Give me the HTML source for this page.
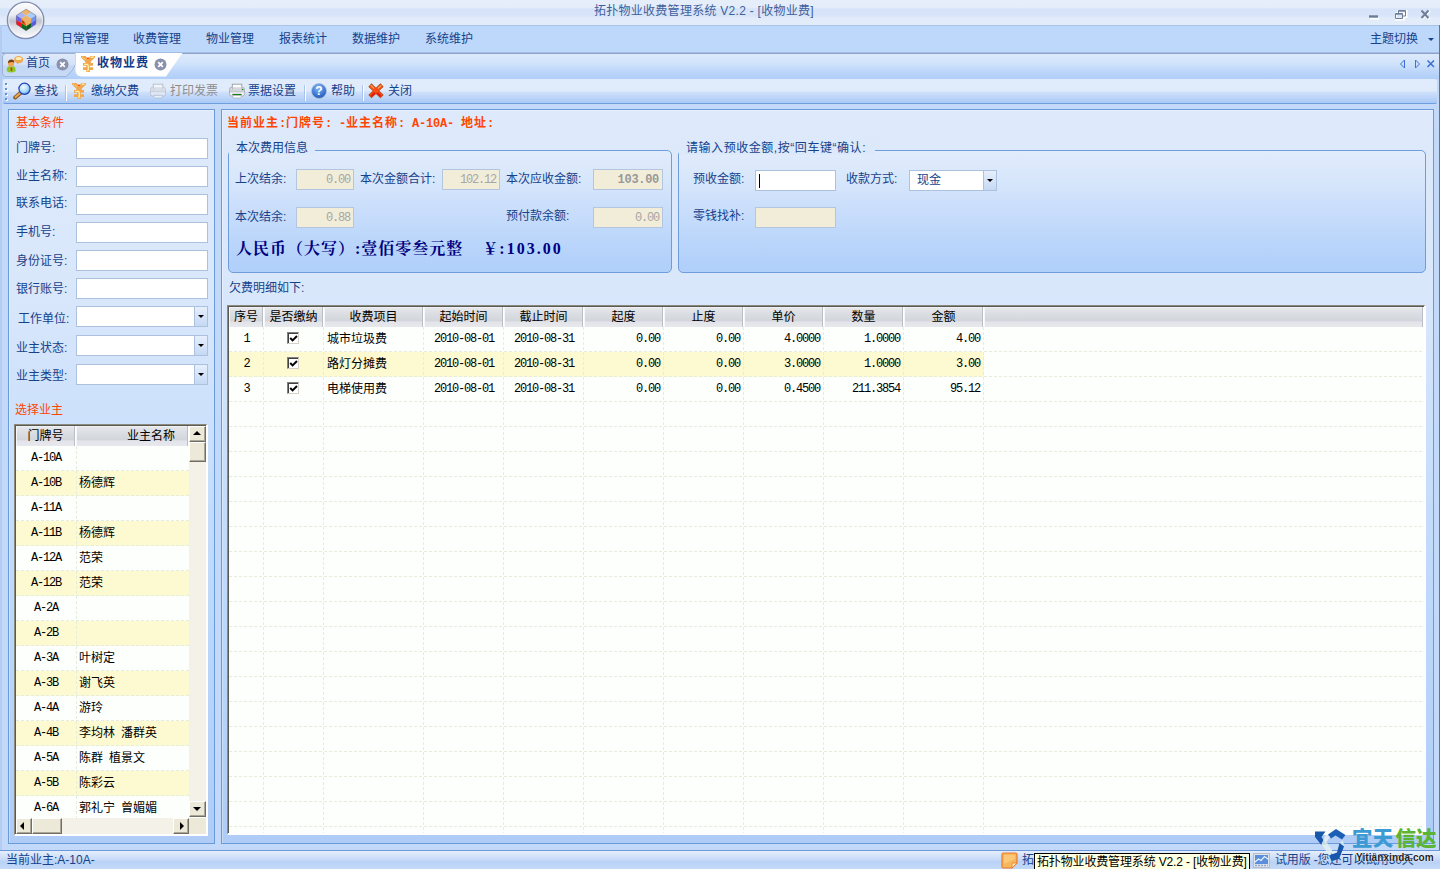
<!DOCTYPE html>
<html lang="zh-CN">
<head>
<meta charset="utf-8">
<title>拓扑物业收费管理系统 V2.2 - [收物业费]</title>
<style>
*{box-sizing:border-box;margin:0;padding:0}
html,body{width:1440px;height:869px;overflow:hidden}
body{position:relative;background:#c2d9f9;font-family:"Liberation Sans","Noto Sans CJK SC","WenQuanYi Zen Hei",sans-serif;font-size:12px;color:#15428b;line-height:14px}
.abs{position:absolute}
.t{position:absolute;white-space:nowrap;line-height:14px;height:14px}
/* top bars */
#titlebar{left:0;top:0;width:1440px;height:25px;background:linear-gradient(#e5eef9 0,#e4edf9 30%,#d6e4f9 36%,#d8e5f9 64%,#e2ebf9 72%,#e3ecf9 100%)}
#menubar{left:0;top:25px;width:1440px;height:29px;background:#bed8fb;border-top:1px solid #aac3ea;border-bottom:1px solid #8fa3c4;box-shadow:inset 0 -1px 0 #a3bde4}
#tabbar{left:0;top:54px;width:1440px;height:25px;background:linear-gradient(#dce9fb,#d0e2fb 40%,#bdd6fa 70%,#b0cef8)}
#toolbar{left:3px;top:79px;width:1434px;height:25px;background:linear-gradient(#e1ecfb,#dfeafb 50%,#cfe0fb 55%,#a9c9f7);border-bottom:1px solid #6f9de0;border-radius:3px 3px 2px 2px}
.menu{color:#15428b}
/* panels */
.panel{position:absolute;border:1px solid #6a9ad9;background:linear-gradient(#deeafb 0,#d9e7fb 25%,#c9dffb 47%,#bcd8fb 68%,#afccf7 100%);box-shadow:inset 1px 1px 0 rgba(255,255,255,.3)}
.inp{position:absolute;background:#fff;border:1px solid #abc1de;height:21px}
.combo::after{content:"";position:absolute;right:0;top:0;width:12px;height:19px;background:linear-gradient(#e6effc,#c5d9f5);border-left:1px solid #abc1de}
.combo::before{content:"";position:absolute;right:3px;top:8px;border:3px solid transparent;border-top:3px solid #000;border-bottom:0;z-index:2}
.ro{position:absolute;background:#f2edd9;border:1px solid #b4c6de;height:21px;color:#a6a6a6;text-align:right;padding:3px 3px 0 0;font-family:"Liberation Mono",monospace;font-size:12px;letter-spacing:-1.2px;line-height:14px}
.org{color:#ff4500}
.grp{position:absolute;border:1px solid #6f9ddb;border-radius:5px;background:linear-gradient(#e1ecfc 0,#d8e7fb 22%,#cde0fb 42%,#c0d9fb 65%,#b3d1fa 90%,#b0cffa 100%)}
.leg{position:absolute;top:-10px;background:#dce9fb;padding:0 7px 0 7px;height:14px;line-height:14px;color:#15428b;white-space:nowrap}
/* grid */
.grid{position:absolute;background:#fdfffc;border:1px solid;border-color:#8c8a7c #fff #fff #8c8a7c;border-right-width:2px;border-bottom-width:2px}
.gi{position:absolute;left:0;top:0;right:0;bottom:0;border-left:1px solid #5a5a54;border-top:1px solid #5a5a54;overflow:hidden}
.gh{position:absolute;top:0;height:20px;background:linear-gradient(#f4f5f7 0,#e3e5e9 8%,#d9dce1 40%,#d2d6dc 70%,#e2e4e9 74%,#e6e8ec 100%);border-right:1px solid #fff;box-shadow:inset 1px 0 0 #f6f7f9,inset -1px 0 0 #b9bec8;color:#000;text-align:center;line-height:20px;white-space:nowrap}
.row{position:absolute;left:0;height:25px}
.alt{background:#fdf9d0}
.c{position:absolute;top:0;height:25px;line-height:25px;color:#000;white-space:nowrap}
.num{font-family:"Liberation Mono","Liberation Sans",monospace;font-size:12px;letter-spacing:-1.2px}

.ttl{color:#3e5f9c;letter-spacing:.27px}
.cur{font-weight:bold;font-family:"Liberation Sans","Noto Sans CJK SC",sans-serif;letter-spacing:1px}
.cur .hw{font-family:"Liberation Mono",monospace;letter-spacing:-0.2px;font-size:12px}
.hw{font-family:"Liberation Mono",monospace;font-size:10px}
.big{font-family:"Liberation Serif","Noto Serif CJK SC",serif;font-weight:bold;font-size:16px;letter-spacing:1px;color:#000080;line-height:18px;height:18px}
.vl{position:absolute;top:0;width:1px;height:100%;background:repeating-linear-gradient(to bottom,#e7eddc 0,#e7eddc 3px,transparent 3px,transparent 5px)}
.tb .gi{background-color:#fdfffc}
.hl{position:absolute;left:0;right:0;height:1px;background:repeating-linear-gradient(to right,#e7eddc 0,#e7eddc 3px,transparent 3px,transparent 5px)}
.chk{position:absolute;width:12px;height:12px;background:#fff;border:1px solid #808080;border-right-color:#d4d0c8;border-bottom-color:#d4d0c8;box-shadow:inset 1px 1px 0 #404040}
.chk svg{position:absolute;left:1px;top:1px}
.sbv{position:absolute;right:0;top:0;width:17px;bottom:17px;background:#f4f2e8}
.sbh{position:absolute;left:0;bottom:0;right:17px;height:16px;background:#f4f2e8}
.sbtn{position:absolute;width:17px;height:16px;background:#ece9d8;border:1px solid #fff;border-right-color:#716f64;border-bottom-color:#716f64;box-shadow:inset -1px -1px 0 #aca899}
.sbtn i{position:absolute;border:4px solid transparent}
.au{left:3px;border-bottom:4px solid #000 !important;border-top:0 !important;top:4px}
.ad{left:3px;top:5px;border-top:4px solid #000 !important;border-bottom:0 !important}
.al{left:3px;top:3px;border-right:4px solid #000 !important;border-left:0 !important}
.ar{left:6px;top:3px;border-left:4px solid #000 !important;border-right:0 !important}
#status{left:0;top:850px;width:1440px;height:19px;background:linear-gradient(#e4eefc,#d3e2fa 30%,#c4d9f8 50%,#b9d2f6 60%,#c3d9f8);border-top:1px solid #6c98dc}
#redge{left:1439px;top:25px;width:1px;height:825px;background:#6f7173}
#ledge{left:0;top:25px;width:2px;height:825px;background:#b4ccf2}
.tip{left:1034px;top:853px;height:17px;line-height:17px;background:#ffffe1;border:1px solid #000;color:#000;padding:0 2px;white-space:nowrap;letter-spacing:-.15px}

.grip{left:5px;top:83px;width:2px;height:2px;background:#5f8fd6;box-shadow:0 5px 0 #5f8fd6,0 10px 0 #5f8fd6,0 15px 0 #5f8fd6,1px 1px 0 #fff,1px 6px 0 #fff,1px 11px 0 #fff,1px 16px 0 #fff}
.sep{top:85px;width:1px;height:16px;background:#fff;box-shadow:-1px 0 0 #a9c3ea}
.wm{position:absolute;left:1352px;top:826px;font-family:"Liberation Sans","Noto Sans CJK SC",sans-serif;font-weight:900;font-size:20.5px;line-height:26px;white-space:nowrap;letter-spacing:.2px}
.wm2{position:absolute;left:1356px;top:852px;font-family:"Liberation Sans",sans-serif;font-weight:bold;font-size:10px;line-height:12px;letter-spacing:.1px;color:#222;text-shadow:0 0 1px #fff,0 0 2px #fff;white-space:nowrap}
</style>
</head>
<body>
<div id="titlebar" class="abs"></div>
<div id="menubar" class="abs"></div>
<div id="tabbar" class="abs"></div>
<div id="toolbar" class="abs"></div>
<div id="redge" class="abs"></div>
<div id="ledge" class="abs"></div>
<svg class="abs" style="left:5px;top:0px" width="42" height="42" viewBox="0 0 42 42"><defs><linearGradient id="og" x1="0" y1="0" x2="0" y2="1"><stop offset="0" stop-color="#fdfdfe"/><stop offset=".36" stop-color="#e9ebf0"/><stop offset=".52" stop-color="#bfc3d1"/><stop offset=".68" stop-color="#dfe1e8"/><stop offset="1" stop-color="#fbfbfd"/></linearGradient></defs><circle cx="20.6" cy="20.3" r="18.2" fill="url(#og)" stroke="#828bb0" stroke-width="1.3"/><circle cx="20.6" cy="20.3" r="16.8" fill="none" stroke="#fff" stroke-opacity=".6" stroke-width="1"/><path d="M21.1 9.2 L26.1 12.3 L21.2 15.5 L16.2 12.3z" fill="#f0b264"/><path d="M16.2 12.3 L21.2 15.5 L16.2 18.6 L11.4 15.5z" fill="#a9b4f0"/><path d="M26.1 12.3 L31.0 15.5 L26.1 18.6 L21.2 15.5z" fill="#a9ccf8"/><path d="M21.2 15.5 L26.1 18.6 L21.1 21.7 L16.2 18.6z" fill="#f0b264"/><path d="M11.4 15.5 L16.2 18.6 L16.2 23.1 L11.4 19.9z" fill="#6464e0"/><path d="M16.2 18.6 L21.1 21.7 L21.1 26.2 L16.2 23.1z" fill="#ff5a14"/><path d="M11.4 19.9 L16.2 23.1 L16.2 27.4 L11.4 24.2z" fill="#ff1414"/><path d="M16.2 23.1 L21.1 26.2 L21.1 30.7 L16.2 27.4z" fill="#0d6b1e"/><path d="M21.1 21.7 L26.1 18.6 L26.1 23.1 L21.1 26.2z" fill="#eeae60"/><path d="M26.1 18.6 L31.0 15.5 L30.9 19.9 L26.1 23.1z" fill="#6e94f4"/><path d="M26.1 23.1 L30.9 19.9 L30.7 24.2 L25.9 27.4z" fill="#5c5ce0"/><path d="M21.1 26.2 L26.1 23.1 L25.9 27.4 L21.1 30.7z" fill="#0a5c18"/><path d="M16.2 18.6 L21.1 21.7 L21.1 23.9 L17.8 20.2z" fill="#f0b264"/><path d="M17.2 20.6 L19.4 21.8 L19.4 23.8 L17.2 22.6z" fill="#8a4a10"/><path d="M21.1 9.2 L31 15.5 L30.7 24.2 L21.1 30.7 L11.4 24.2 L11.4 15.5z" fill="none" stroke="#39406e" stroke-opacity=".55" stroke-width=".7"/></svg>
<div class="t ttl" style="left:594px;top:4px;">拓扑物业收费管理系统 V2.2 - [收物业费]</div>
<div class="t menu" style="left:61px;top:32px;">日常管理</div>
<div class="t menu" style="left:133px;top:32px;">收费管理</div>
<div class="t menu" style="left:206px;top:32px;">物业管理</div>
<div class="t menu" style="left:279px;top:32px;">报表统计</div>
<div class="t menu" style="left:352px;top:32px;">数据维护</div>
<div class="t menu" style="left:425px;top:32px;">系统维护</div>
<div class="t menu" style="left:1370px;top:32px;">主题切换</div>
<div class="abs" style="left:1428px;top:38px;border:3px solid transparent;border-top:3px solid #15428b;border-bottom:0"></div>
<svg class="abs" style="left:1366px;top:8px" width="70" height="14" viewBox="0 0 70 14"><g fill="none" stroke="#fff" stroke-width="2"><path d="M4 10.5h9" /><path d="M30 5.5h8v6h-8z M32.5 5 v-2 h8 v6 h-2"/><path d="M56 3l8 8M64 3l-8 8"/></g><g fill="none" stroke="#6f7d96"><path d="M3 8.5h9" stroke-width="2.4"/><path d="M29.5 5.5h7v5h-7z M29.5 6.2h7 M32.5 5 v-2.5 h7 v5.5 h-2.5 M32.5 3.2h7" stroke-width="1"/><path d="M55.5 2.5l7 7.5M62.5 2.5l-7 7.5" stroke-width="2"/></g></svg>
<svg class="abs" style="left:0;top:52px" width="200" height="26" viewBox="0 0 200 26"><defs><linearGradient id="t1" x1="0" y1="0" x2="0" y2="1"><stop offset="0" stop-color="#dfe9f9"/><stop offset=".5" stop-color="#d3e1f7"/><stop offset=".55" stop-color="#c3d6f4"/><stop offset="1" stop-color="#c9dbf6"/></linearGradient></defs><path d="M2.5 5 Q2.5 1.5 6 1.5 H75.5 V12 Q74 18 66 24.5 H6 Q2.5 24.5 2.5 21z" fill="url(#t1)" stroke="#9db3d6" stroke-width="1"/><path d="M75.5 1 H182.5 L166 24.5 H82 Q75.5 24.5 75.5 18z" fill="#fdfefd"/></svg>
<svg class="abs" style="left:6px;top:55px" width="18" height="18" viewBox="0 0 18 18"><ellipse cx="12.6" cy="4.6" rx="4.6" ry="3.6" fill="#f0a850"/><ellipse cx="12.6" cy="3.4" rx="3" ry="1.5" fill="#fbeeb4"/><path d="M10.6 7l.6 2.8 1.6-2.4z" fill="#f0a850"/><circle cx="5.1" cy="8.6" r="3.1" fill="#f2a652"/><path d="M1.9 8.2 Q2 4.6 5.4 4.6 Q8.3 4.8 8.3 7.6 Q5.6 6.4 1.9 8.2z" fill="#7a3c0c"/><path d="M0.8 16.2 Q0.4 11.2 3.6 11.2 L5.2 12.4 L6.8 11.2 Q10 11.2 9.6 16.2 Q5 19 0.8 16.2z" fill="#8cc820"/><path d="M4.7 12.2h1.2l.5 3-.9 1.1-.9-1.1z" fill="#f02010"/></svg>
<div class="t menu" style="left:26px;top:56px;">首页</div>
<svg class="abs" style="left:56px;top:58px" width="13" height="13" viewBox="0 0 13 13"><circle cx="6.5" cy="6.5" r="6" fill="#8991ad"/><path d="M4.2 4.2l4.6 4.6M8.8 4.2l-4.6 4.6" stroke="#fff" stroke-width="1.8"/></svg>
<svg class="abs" style="left:81px;top:56px" width="14" height="16" viewBox="0 0 14 16"><path d="M0 0H4.5L7 2.6 9.5 0H14V1.5L9.8 5.5V7H12V9.8H8.8V11.2H12V14H8.8V16H5.2V14H2V11.2H5.2V9.8H2V7H4.2V5.5L0 1.5Z" fill="#f0a750"/><path d="M9.6 1.3 12.6 1M3.2 8.3H6.4Q7.5 8.6 7.3 10.4V12.4Q7.9 13.4 7 14L6.4 15.2" stroke="#fbf2a4" stroke-width="1.3" fill="none"/><path d="M1.2 1 5 3.7" stroke="#fbf2a4" stroke-width="1" stroke-dasharray="1 1" fill="none"/><ellipse cx="7" cy="2.3" rx="1.1" ry=".7" fill="#ff3c00"/></svg>
<div class="t menu" style="left:97px;top:56px;font-weight:bold;letter-spacing:1px;color:#0d3a8a">收物业费</div>
<svg class="abs" style="left:154px;top:58px" width="13" height="13" viewBox="0 0 13 13"><circle cx="6.5" cy="6.5" r="6" fill="#8991ad"/><path d="M4.2 4.2l4.6 4.6M8.8 4.2l-4.6 4.6" stroke="#fff" stroke-width="1.8"/></svg>
<svg class="abs" style="left:1398px;top:58px" width="40" height="12" viewBox="0 0 40 12"><g fill="none" stroke="#3c72d4" stroke-width="1"><path d="M6.5 2 v8 l-4-4z"/><path d="M17.5 2 v8 l4-4z"/></g><path d="M29.5 2.5l6.5 6.5M36 2.5l-6.5 6.5" stroke="#3c72d4" stroke-width="1.6"/></svg>
<div class="abs grip"></div>
<svg class="abs" style="left:13px;top:82px" width="19" height="18" viewBox="0 0 19 18"><defs><radialGradient id="lg" cx="40%" cy="35%" r="70%"><stop offset="0" stop-color="#f4fbff"/><stop offset=".6" stop-color="#a9d8fb"/><stop offset="1" stop-color="#4f9bea"/></radialGradient></defs><path d="M8 10.5l-5.8 5" stroke="#8a5a1c" stroke-width="4" stroke-linecap="round"/><path d="M7.6 10.8l-5 4.3" stroke="#e7a85a" stroke-width="2" stroke-linecap="round"/><circle cx="11.5" cy="6.8" r="5.6" fill="url(#lg)" stroke="#1f3fb0" stroke-width="1.2"/></svg>
<div class="t menu" style="left:34px;top:84px;">查找</div>
<div class="abs sep" style="left:66px"></div>
<svg class="abs" style="left:72px;top:83px" width="14" height="16" viewBox="0 0 14 16"><path d="M0 0H4.5L7 2.6 9.5 0H14V1.5L9.8 5.5V7H12V9.8H8.8V11.2H12V14H8.8V16H5.2V14H2V11.2H5.2V9.8H2V7H4.2V5.5L0 1.5Z" fill="#f0a750"/><path d="M9.6 1.3 12.6 1M3.2 8.3H6.4Q7.5 8.6 7.3 10.4V12.4Q7.9 13.4 7 14L6.4 15.2" stroke="#fbf2a4" stroke-width="1.3" fill="none"/><path d="M1.2 1 5 3.7" stroke="#fbf2a4" stroke-width="1" stroke-dasharray="1 1" fill="none"/><ellipse cx="7" cy="2.3" rx="1.1" ry=".7" fill="#ff3c00"/></svg>
<div class="t menu" style="left:91px;top:84px;">缴纳欠费</div>
<svg class="abs" style="left:150px;top:83px;opacity:.6" width="16" height="16" viewBox="0 0 16 16"><defs><linearGradient id="pg1" x1="0" y1="0" x2="0" y2="1"><stop offset="0" stop-color="#eef0f3"/><stop offset=".5" stop-color="#c3c6cd"/><stop offset=".62" stop-color="#eceef0"/><stop offset="1" stop-color="#fafafb"/></linearGradient></defs><rect x=".4" y="4.4" width="15.2" height="8.6" rx="2.2" fill="url(#pg1)" stroke="#a0a4ab" stroke-width=".8"/><rect x="3.3" y="1.2" width="9.5" height="5" fill="#fdfdfd" stroke="#9a9ea5" stroke-width=".9"/><rect x="3.6" y="4.2" width="8.9" height="3.6" fill="#d4d7dd"/><rect x="3.4" y="10.9" width="9.2" height="1.4" fill="#e3e6e9"/><path d="M3.6 12.4H12.4L11.9 14.9H4.1z" fill="#fff" stroke="#a9adb3" stroke-width=".7"/><rect x="13" y="5.9" width="1.3" height="1.1" fill="#e3e6e9"/></svg>
<div class="t " style="left:170px;top:84px;color:#8d8d8d">打印发票</div>
<svg class="abs" style="left:229px;top:83px;opacity:1" width="16" height="16" viewBox="0 0 16 16"><defs><linearGradient id="pg2" x1="0" y1="0" x2="0" y2="1"><stop offset="0" stop-color="#eef0f3"/><stop offset=".5" stop-color="#c3c6cd"/><stop offset=".62" stop-color="#eceef0"/><stop offset="1" stop-color="#fafafb"/></linearGradient></defs><rect x=".4" y="4.4" width="15.2" height="8.6" rx="2.2" fill="url(#pg2)" stroke="#a0a4ab" stroke-width=".8"/><rect x="3.3" y="1.2" width="9.5" height="5" fill="#fdfdfd" stroke="#9a9ea5" stroke-width=".9"/><rect x="3.6" y="4.2" width="8.9" height="3.6" fill="#d4d7dd"/><rect x="3.4" y="10.9" width="9.2" height="1.4" fill="#0f7a12"/><path d="M3.6 12.4H12.4L11.9 14.9H4.1z" fill="#fff" stroke="#a9adb3" stroke-width=".7"/><rect x="13" y="5.9" width="1.3" height="1.1" fill="#0f7a12"/></svg>
<div class="t menu" style="left:248px;top:84px;">票据设置</div>
<div class="abs sep" style="left:305px"></div>
<svg class="abs" style="left:311px;top:83px" width="16" height="16" viewBox="0 0 16 16"><defs><radialGradient id="hg" cx="45%" cy="30%" r="75%"><stop offset="0" stop-color="#8db8f0"/><stop offset=".6" stop-color="#3d7bd6"/><stop offset="1" stop-color="#2453a8"/></radialGradient></defs><circle cx="8" cy="8" r="7.5" fill="url(#hg)" stroke="#aebfd8" stroke-width=".8"/><text x="8" y="12.2" text-anchor="middle" font-family="Liberation Sans,sans-serif" font-weight="bold" font-size="12" fill="#fff">?</text></svg>
<div class="t menu" style="left:331px;top:84px;">帮助</div>
<div class="abs sep" style="left:363px"></div>
<svg class="abs" style="left:368px;top:83px" width="16" height="16" viewBox="0 0 16 16"><g stroke-linecap="square" fill="none"><path d="M3.6 3.6l8.8 8.4M12.4 3.6l-8.8 8.4" stroke="#a9521c" stroke-width="4.6"/><path d="M3.6 3.6l8.8 8.4M12.4 3.6l-8.8 8.4" stroke="#ff4a10" stroke-width="3.2"/><path d="M3.2 2.8l2.4 2.3M12.8 2.8l-2.4 2.3" stroke="#f7a860" stroke-width="1.2"/><path d="M4 12.6l2.2-2.1M12 12.6l-2.2-2.1" stroke="#e01c0c" stroke-width="2"/></g></svg>
<div class="t menu" style="left:388px;top:84px;">关闭</div>
<div class="panel" style="left:8px;top:109px;width:207px;height:735px"></div>
<div class="t org" style="left:16px;top:116px;">基本条件</div>
<div class="t " style="left:16px;top:141px;">门牌号:</div>
<div class="inp" style="left:76px;top:138px;width:132px"></div>
<div class="t " style="left:16px;top:169px;">业主名称:</div>
<div class="inp" style="left:76px;top:166px;width:132px"></div>
<div class="t " style="left:16px;top:196px;">联系电话:</div>
<div class="inp" style="left:76px;top:194px;width:132px"></div>
<div class="t " style="left:16px;top:225px;">手机号:</div>
<div class="inp" style="left:76px;top:222px;width:132px"></div>
<div class="t " style="left:16px;top:254px;">身份证号:</div>
<div class="inp" style="left:76px;top:250px;width:132px"></div>
<div class="t " style="left:16px;top:282px;">银行账号:</div>
<div class="inp" style="left:76px;top:278px;width:132px"></div>
<div class="t " style="left:18px;top:312px;">工作单位:</div>
<div class="inp combo" style="left:76px;top:306px;width:132px"></div>
<div class="t " style="left:16px;top:341px;">业主状态:</div>
<div class="inp combo" style="left:76px;top:335px;width:132px"></div>
<div class="t " style="left:16px;top:369px;">业主类型:</div>
<div class="inp combo" style="left:76px;top:364px;width:132px"></div>
<div class="t org" style="left:15px;top:403px;">选择业主</div>
<div class="grid" style="left:14px;top:424px;width:194px;height:412px"><div class="gi">
<div class="gh" style="left:0;width:60px">门牌号</div>
<div class="gh" style="left:60px;width:113px;text-align:right;padding-right:13px">业主名称</div>
<div class="row" style="top:20px;width:173px"><div class="c num" style="left:0;width:60px;text-align:center">A-10A</div><div class="c" style="left:63px"></div><div class="vl" style="left:60px"></div><div class="hl" style="top:24px"></div></div>
<div class="row alt" style="top:45px;width:173px"><div class="c num" style="left:0;width:60px;text-align:center">A-10B</div><div class="c" style="left:63px">杨德辉</div><div class="vl" style="left:60px"></div><div class="hl" style="top:24px"></div></div>
<div class="row" style="top:70px;width:173px"><div class="c num" style="left:0;width:60px;text-align:center">A-11A</div><div class="c" style="left:63px"></div><div class="vl" style="left:60px"></div><div class="hl" style="top:24px"></div></div>
<div class="row alt" style="top:95px;width:173px"><div class="c num" style="left:0;width:60px;text-align:center">A-11B</div><div class="c" style="left:63px">杨德辉</div><div class="vl" style="left:60px"></div><div class="hl" style="top:24px"></div></div>
<div class="row" style="top:120px;width:173px"><div class="c num" style="left:0;width:60px;text-align:center">A-12A</div><div class="c" style="left:63px">范荣</div><div class="vl" style="left:60px"></div><div class="hl" style="top:24px"></div></div>
<div class="row alt" style="top:145px;width:173px"><div class="c num" style="left:0;width:60px;text-align:center">A-12B</div><div class="c" style="left:63px">范荣</div><div class="vl" style="left:60px"></div><div class="hl" style="top:24px"></div></div>
<div class="row" style="top:170px;width:173px"><div class="c num" style="left:0;width:60px;text-align:center">A-2A</div><div class="c" style="left:63px"></div><div class="vl" style="left:60px"></div><div class="hl" style="top:24px"></div></div>
<div class="row alt" style="top:195px;width:173px"><div class="c num" style="left:0;width:60px;text-align:center">A-2B</div><div class="c" style="left:63px"></div><div class="vl" style="left:60px"></div><div class="hl" style="top:24px"></div></div>
<div class="row" style="top:220px;width:173px"><div class="c num" style="left:0;width:60px;text-align:center">A-3A</div><div class="c" style="left:63px">叶树定</div><div class="vl" style="left:60px"></div><div class="hl" style="top:24px"></div></div>
<div class="row alt" style="top:245px;width:173px"><div class="c num" style="left:0;width:60px;text-align:center">A-3B</div><div class="c" style="left:63px">谢飞英</div><div class="vl" style="left:60px"></div><div class="hl" style="top:24px"></div></div>
<div class="row" style="top:270px;width:173px"><div class="c num" style="left:0;width:60px;text-align:center">A-4A</div><div class="c" style="left:63px">游玲</div><div class="vl" style="left:60px"></div><div class="hl" style="top:24px"></div></div>
<div class="row alt" style="top:295px;width:173px"><div class="c num" style="left:0;width:60px;text-align:center">A-4B</div><div class="c" style="left:63px">李均林<span class="hw"> </span>潘群英</div><div class="vl" style="left:60px"></div><div class="hl" style="top:24px"></div></div>
<div class="row" style="top:320px;width:173px"><div class="c num" style="left:0;width:60px;text-align:center">A-5A</div><div class="c" style="left:63px">陈群<span class="hw"> </span>植景文</div><div class="vl" style="left:60px"></div><div class="hl" style="top:24px"></div></div>
<div class="row alt" style="top:345px;width:173px"><div class="c num" style="left:0;width:60px;text-align:center">A-5B</div><div class="c" style="left:63px">陈彩云</div><div class="vl" style="left:60px"></div><div class="hl" style="top:24px"></div></div>
<div class="row" style="top:370px;width:173px"><div class="c num" style="left:0;width:60px;text-align:center">A-6A</div><div class="c" style="left:63px">郭礼宁<span class="hw"> </span>曾媚媚</div><div class="vl" style="left:60px"></div><div class="hl" style="top:24px"></div></div>
<div class="sbv"><div class="sbtn" style="top:0"><i class="au"></i></div><div class="sbtn" style="top:16px;height:20px"></div><div class="sbtn" style="bottom:0"><i class="ad"></i></div></div>
<div class="sbh"><div class="sbtn" style="left:0;width:16px"><i class="al"></i></div><div class="sbtn" style="left:16px;width:30px"></div><div class="sbtn" style="right:0;width:16px"><i class="ar"></i></div></div>
<div class="abs" style="right:0;bottom:0;width:17px;height:16px;background:#ece9d8"></div>
</div></div>
<div class="panel" style="left:221px;top:109px;width:1213px;height:735px"></div>
<div class="t org cur" style="left:227px;top:116px;">当前业主<span class="hw">:</span>门牌号<span class="hw">: -</span>业主名称<span class="hw">: A-10A- </span>地址<span class="hw">:</span></div>
<div class="grp" style="left:228px;top:150px;width:444px;height:123px"><div class="leg" style="left:0px">本次费用信息</div></div>
<div class="t " style="left:235px;top:172px;">上次结余:</div>
<div class="ro" style="left:296px;top:169px;width:58px">0.00</div>
<div class="t " style="left:360px;top:172px;">本次金额合计:</div>
<div class="ro" style="left:442px;top:169px;width:58px">102.12</div>
<div class="t " style="left:506px;top:172px;">本次应收金额:</div>
<div class="ro" style="left:593px;top:169px;width:70px;font-weight:bold;color:#999;letter-spacing:-.3px">103.00</div>
<div class="t " style="left:235px;top:210px;">本次结余:</div>
<div class="ro" style="left:296px;top:207px;width:58px">0.88</div>
<div class="t " style="left:506px;top:209px;">预付款余额:</div>
<div class="ro" style="left:593px;top:207px;width:70px">0.00</div>
<div class="t big" style="left:236px;top:240px;">人民币（大写）:壹佰零叁元整<span style="display:inline-block;width:19px"></span>￥<span style="letter-spacing:2px">:103.00</span></div>
<div class="grp" style="left:678px;top:150px;width:748px;height:123px"><div class="leg" style="left:0px;letter-spacing:.55px;padding-right:9px">请输入预收金额,按“回车键“确认:</div></div>
<div class="t " style="left:693px;top:172px;">预收金额:</div>
<div class="inp" style="left:755px;top:170px;width:81px;height:21px"><div class="abs" style="left:3px;top:3px;width:1px;height:14px;background:#000"></div></div>
<div class="t " style="left:846px;top:172px;">收款方式:</div>
<div class="inp combo" style="left:909px;top:170px;width:88px;height:21px"><div class="t" style="left:7px;top:2px;color:#15428b">现金</div></div>
<div class="t " style="left:693px;top:209px;">零钱找补:</div>
<div class="ro" style="left:755px;top:207px;width:81px"></div>
<div class="t " style="left:229px;top:281px;">欠费明细如下:</div>
<div class="grid tb" style="left:227px;top:305px;width:1199px;height:530px"><div class="gi">
<div class="gh" style="left:0px;width:35px">序号</div>
<div class="gh" style="left:35px;width:60px">是否缴纳</div>
<div class="gh" style="left:95px;width:100px">收费项目</div>
<div class="gh" style="left:195px;width:80px">起始时间</div>
<div class="gh" style="left:275px;width:80px">截止时间</div>
<div class="gh" style="left:355px;width:80px">起度</div>
<div class="gh" style="left:435px;width:80px">止度</div>
<div class="gh" style="left:515px;width:80px">单价</div>
<div class="gh" style="left:595px;width:80px">数量</div>
<div class="gh" style="left:675px;width:80px">金额</div>
<div class="gh" style="left:755px;width:440px"></div>
<div class="row" style="top:20px;width:755px"><div class="c num" style="left:0;width:35px;text-align:center">1</div><div class="chk" style="left:58px;top:5px"><svg width="9" height="9" viewBox="0 0 9 9"><path d="M1.2 4 L3.6 6.4 L8 2" stroke="#000" stroke-width="2" fill="none"/></svg></div><div class="c" style="left:98px">城市垃圾费</div><div class="c num" style="left:195px;width:80px;text-align:center">2010-08-01</div><div class="c num" style="left:275px;width:80px;text-align:center">2010-08-31</div><div class="c num" style="left:355px;width:76px;text-align:right">0.00</div><div class="c num" style="left:435px;width:76px;text-align:right">0.00</div><div class="c num" style="left:515px;width:76px;text-align:right">4.0000</div><div class="c num" style="left:595px;width:76px;text-align:right">1.0000</div><div class="c num" style="left:675px;width:76px;text-align:right">4.00</div></div>
<div class="row alt" style="top:45px;width:755px"><div class="c num" style="left:0;width:35px;text-align:center">2</div><div class="chk" style="left:58px;top:5px"><svg width="9" height="9" viewBox="0 0 9 9"><path d="M1.2 4 L3.6 6.4 L8 2" stroke="#000" stroke-width="2" fill="none"/></svg></div><div class="c" style="left:98px">路灯分摊费</div><div class="c num" style="left:195px;width:80px;text-align:center">2010-08-01</div><div class="c num" style="left:275px;width:80px;text-align:center">2010-08-31</div><div class="c num" style="left:355px;width:76px;text-align:right">0.00</div><div class="c num" style="left:435px;width:76px;text-align:right">0.00</div><div class="c num" style="left:515px;width:76px;text-align:right">3.0000</div><div class="c num" style="left:595px;width:76px;text-align:right">1.0000</div><div class="c num" style="left:675px;width:76px;text-align:right">3.00</div></div>
<div class="row" style="top:70px;width:755px"><div class="c num" style="left:0;width:35px;text-align:center">3</div><div class="chk" style="left:58px;top:5px"><svg width="9" height="9" viewBox="0 0 9 9"><path d="M1.2 4 L3.6 6.4 L8 2" stroke="#000" stroke-width="2" fill="none"/></svg></div><div class="c" style="left:98px">电梯使用费</div><div class="c num" style="left:195px;width:80px;text-align:center">2010-08-01</div><div class="c num" style="left:275px;width:80px;text-align:center">2010-08-31</div><div class="c num" style="left:355px;width:76px;text-align:right">0.00</div><div class="c num" style="left:435px;width:76px;text-align:right">0.00</div><div class="c num" style="left:515px;width:76px;text-align:right">0.4500</div><div class="c num" style="left:595px;width:76px;text-align:right">211.3854</div><div class="c num" style="left:675px;width:76px;text-align:right">95.12</div></div>
<div class="hl" style="top:44px"></div>
<div class="hl" style="top:69px"></div>
<div class="hl" style="top:94px"></div>
<div class="hl" style="top:119px"></div>
<div class="hl" style="top:144px"></div>
<div class="hl" style="top:169px"></div>
<div class="hl" style="top:194px"></div>
<div class="hl" style="top:219px"></div>
<div class="hl" style="top:244px"></div>
<div class="hl" style="top:269px"></div>
<div class="hl" style="top:294px"></div>
<div class="hl" style="top:319px"></div>
<div class="hl" style="top:344px"></div>
<div class="hl" style="top:369px"></div>
<div class="hl" style="top:394px"></div>
<div class="hl" style="top:419px"></div>
<div class="hl" style="top:444px"></div>
<div class="hl" style="top:469px"></div>
<div class="hl" style="top:494px"></div>
<div class="hl" style="top:519px"></div>
<div class="vl" style="left:34px;top:20px"></div>
<div class="vl" style="left:94px;top:20px"></div>
<div class="vl" style="left:194px;top:20px"></div>
<div class="vl" style="left:274px;top:20px"></div>
<div class="vl" style="left:354px;top:20px"></div>
<div class="vl" style="left:434px;top:20px"></div>
<div class="vl" style="left:514px;top:20px"></div>
<div class="vl" style="left:594px;top:20px"></div>
<div class="vl" style="left:674px;top:20px"></div>
<div class="vl" style="left:754px;top:20px"></div>
</div></div>
<div id="status" class="abs"></div>
<div class="t " style="left:6px;top:853px;">当前业主:A-10A-</div>
<svg class="abs" style="left:1001px;top:852px" width="17" height="17" viewBox="0 0 17 17"><path d="M2.5 1 H14.5 Q16 1 16 2.5 V11 L11 16 H2.5 Q1 16 1 14.5 V2.5 Q1 1 2.5 1z" fill="#f6b65a" stroke="#ee7a2a" stroke-width="1.2"/><path d="M16 11 H12.5 Q11 11 11 12.5 V16z" fill="#fde9b8" stroke="#ee7a2a" stroke-width=".8"/><path d="M3 3h11v4L3 12z" fill="#fbd089" opacity=".7"/></svg>
<div class="t " style="left:1022px;top:853px;">拓</div>
<svg class="abs" style="left:1253px;top:853px" width="17" height="15" viewBox="0 0 17 15"><rect x=".5" y=".5" width="16" height="14" fill="#dfe3ea" stroke="#b9bcc4"/><rect x="2" y="2" width="13" height="9" fill="#5b8edb"/><path d="M2 9l3.5-3 2.5 1.5 3.5-4 3.5 2.5" stroke="#e8f1ff" stroke-width="1.3" fill="none"/><path d="M2 12.5h13" stroke="#8fa9d6" stroke-width="1.5" stroke-dasharray="2 1"/></svg>
<div class="t " style="left:1275px;top:853px;letter-spacing:-.15px">试用版 -您还可以试用30天</div>
<div class="tip abs">拓扑物业收费管理系统 V2.2 - [收物业费]</div>
<svg class="abs" style="left:1312px;top:826px" width="36" height="38" viewBox="0 0 36 38"><path d="M3 5.5 L13.5 5.5 L9.5 11 L14.5 18.5 L9 18.5 L3 11z" fill="#1857ab"/><path d="M16 8.5 L24 3 L33.5 9 L30 13.5 L23.5 9.5 L19 12.5z" fill="#1d5fb6"/><path d="M27.5 17 L32 20.5 L27 33 L19.5 35 L17 29.5 L25 26.5z" fill="#1857ab"/><path d="M14 8 L18 11 L14.5 16 L21 26 L17 29.5 L9.5 18 z" fill="#e3f0ee" opacity=".85"/><path d="M30.5 14 L32.5 19.5 L27.5 17z" fill="#dfeeee" opacity=".8"/></svg>
<div class="wm"><span style="color:#3d9bd4">宜天</span><span style="color:#5bb432;margin-left:2px">信达</span></div>
<div class="wm2">Yitianxinda.com</div>
</body>
</html>
